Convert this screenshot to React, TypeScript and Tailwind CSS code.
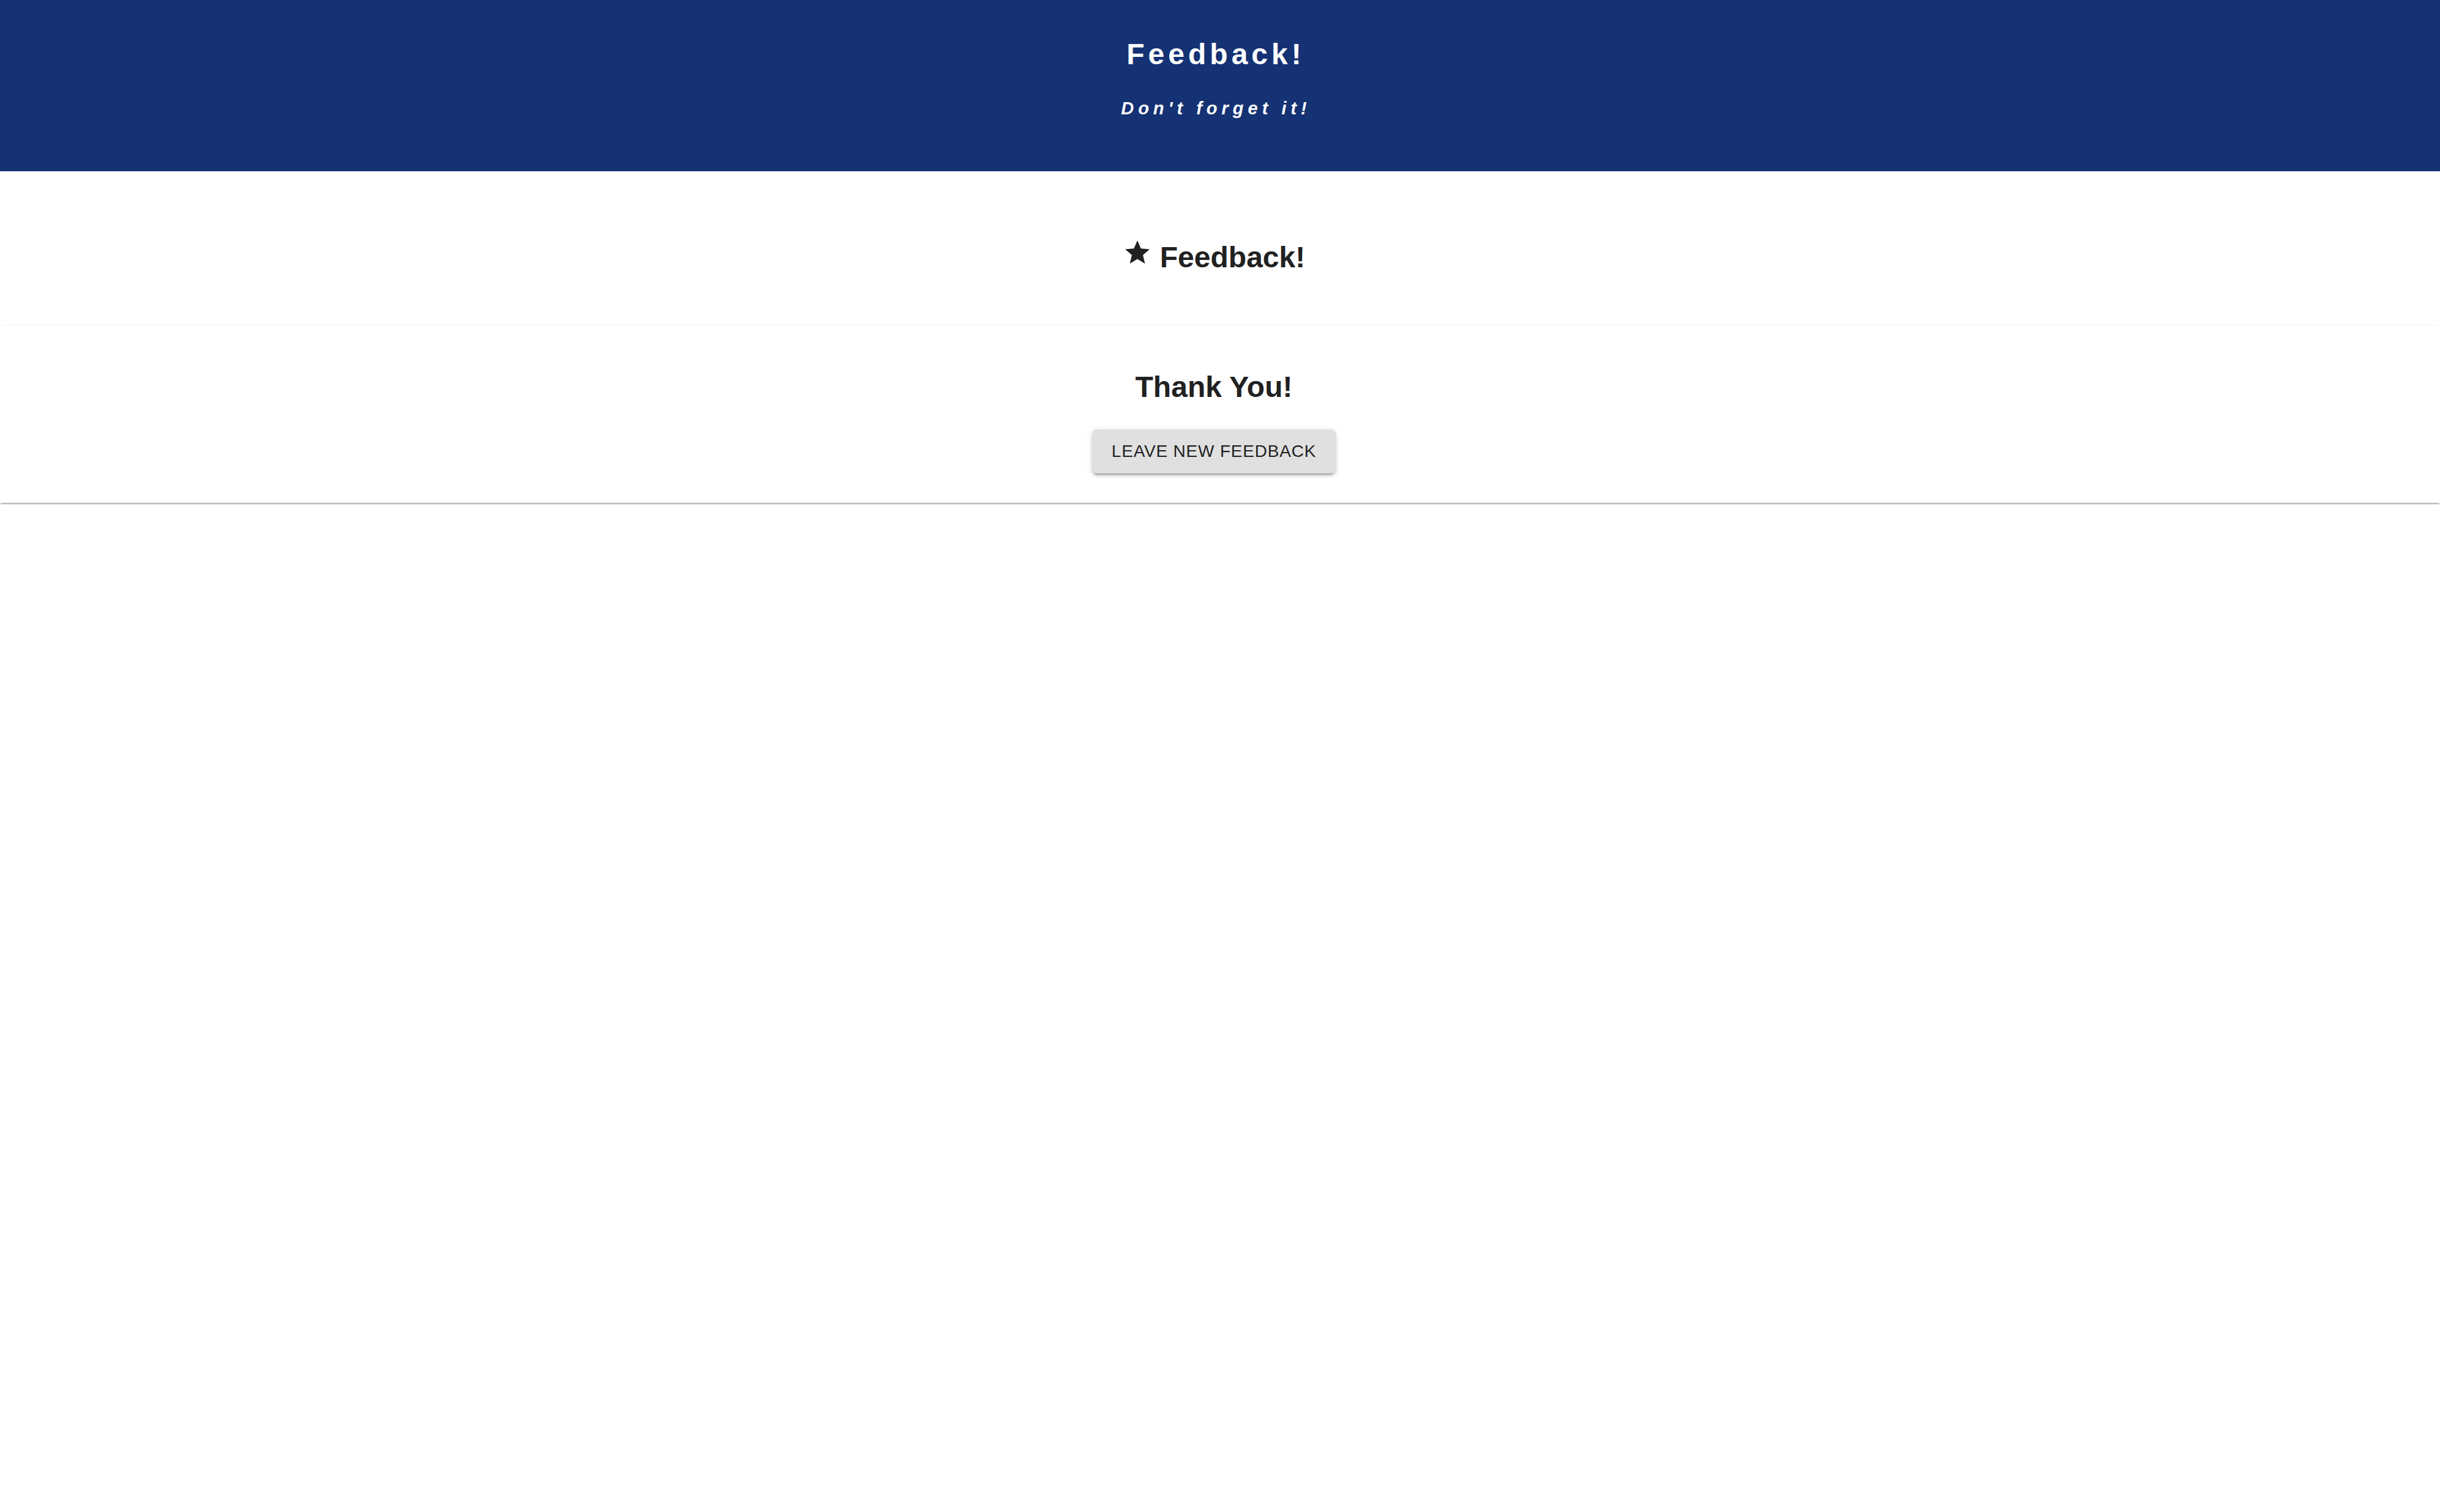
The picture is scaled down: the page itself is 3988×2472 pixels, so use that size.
function StarIcon() {
  return (
    <svg width="48" height="48" viewBox="0 0 24 24" fill="#212121" aria-label="Star">
      <path d="M12 17.27L18.18 21l-1.64-7.03L22 9.24l-7.19-.61L12 2 9.19 8.63 2 9.24l5.46 4.73L5.82 21z" />
    </svg>
  )
}

export default function App() {
  return (
    <div className="min-h-screen bg-white font-['Liberation_Sans',Helvetica,Arial,sans-serif] text-[#212121]">
      {/* Top banner */}
      <header className="h-[280px] bg-[#153274] text-white">
        <div className="flex flex-col items-center pt-[65px] pr-[20px]">
          <h1 className="text-[48px] leading-none font-bold tracking-[6px] pl-[6px]">Feedback!</h1>
          <p className="mt-[50px] text-[29px] leading-none font-bold italic tracking-[7px] pl-[7px]">
            Don't forget it!
          </p>
        </div>
      </header>

      {/* Card title */}
      <section className="bg-white pt-[109px] pb-[88px]">
        <div className="flex items-start justify-center gap-[13px] pr-[20px]">
          <StarIcon />
          <h2 className="mt-[8px] text-[48px] leading-none font-bold">Feedback!</h2>
        </div>
      </section>

      {/* Thank you panel */}
      <section className="relative bg-white pt-[68px] pb-[48px] shadow-[0_4px_2px_-2px_rgba(0,0,0,0.2),0_2px_2px_0_rgba(0,0,0,0.14),0_0_6px_0_rgba(0,0,0,0.06)]">
        <div className="flex flex-col items-center pr-[20px]">
          <h3 className="text-[48px] leading-[64px] font-bold">Thank You!</h3>
          <button
            type="button"
            className="mt-[37px] h-[72px] px-[32px] rounded-[8px] bg-[#e0e0e0] text-[28px] leading-none tracking-[0.8px] uppercase text-[#212121] shadow-[0_6px_2px_-4px_rgba(0,0,0,0.2),0_4px_4px_0_rgba(0,0,0,0.14),0_2px_10px_0_rgba(0,0,0,0.12)]"
          >
            Leave new feedback
          </button>
        </div>
      </section>
    </div>
  )
}
